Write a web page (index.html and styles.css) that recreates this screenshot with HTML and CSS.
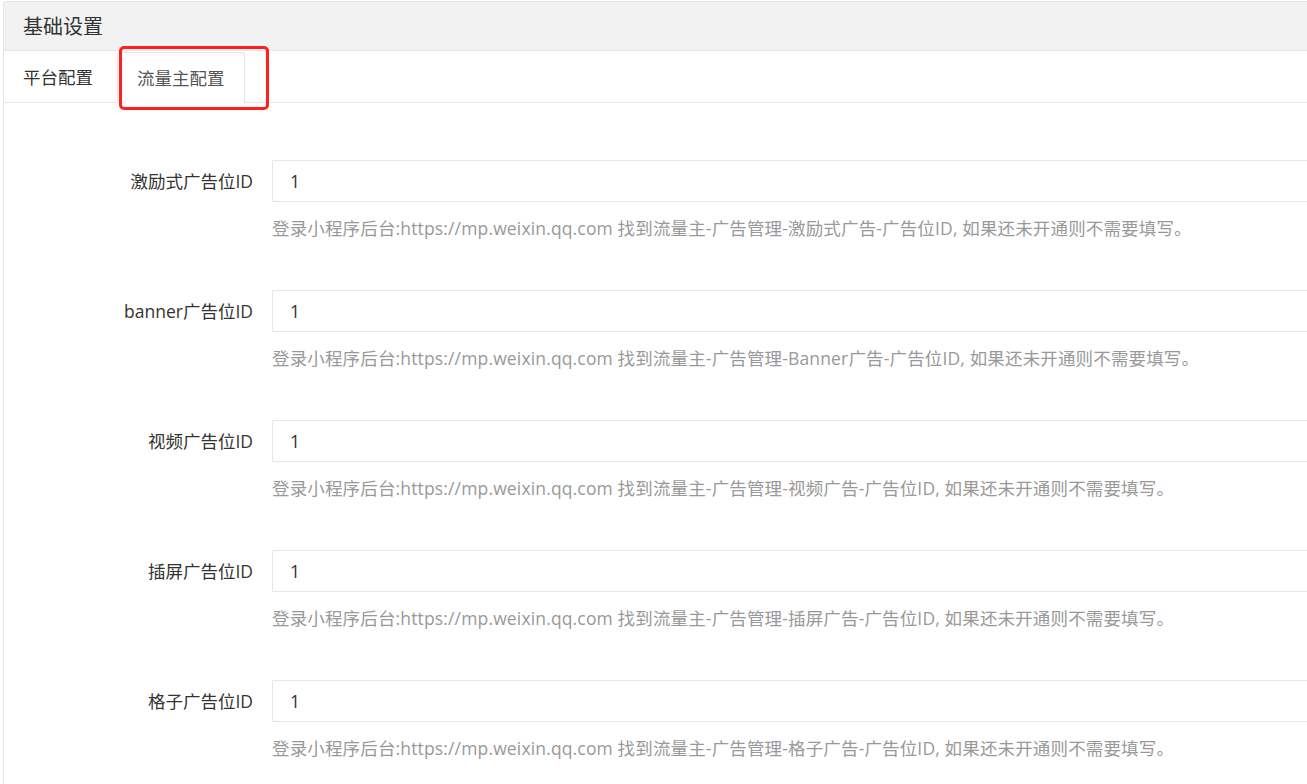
FILE: index.html
```html
<!DOCTYPE html>
<html lang="zh-CN">
<head>
<meta charset="utf-8">
<title>基础设置</title>
<link rel="stylesheet" href="styles.css">
</head>
<body>
<div class="panel">
  <div class="panel-header">基础设置</div>
  <div class="tabs">
    <div class="tab">平台配置</div>
    <div class="tab active">流量主配置</div>
  </div>
  <div class="form">
    <div class="item">
      <label class="label">激励式广告位ID</label>
      <div class="field">
        <div class="input">1</div>
        <div class="help">登录小程序后台:https://mp.weixin.qq.com 找到流量主-广告管理-激励式广告-广告位ID, 如果还未开通则不需要填写。</div>
      </div>
    </div>
    <div class="item">
      <label class="label">banner广告位ID</label>
      <div class="field">
        <div class="input">1</div>
        <div class="help">登录小程序后台:https://mp.weixin.qq.com 找到流量主-广告管理-Banner广告-广告位ID, 如果还未开通则不需要填写。</div>
      </div>
    </div>
    <div class="item">
      <label class="label">视频广告位ID</label>
      <div class="field">
        <div class="input">1</div>
        <div class="help">登录小程序后台:https://mp.weixin.qq.com 找到流量主-广告管理-视频广告-广告位ID, 如果还未开通则不需要填写。</div>
      </div>
    </div>
    <div class="item">
      <label class="label">插屏广告位ID</label>
      <div class="field">
        <div class="input">1</div>
        <div class="help">登录小程序后台:https://mp.weixin.qq.com 找到流量主-广告管理-插屏广告-广告位ID, 如果还未开通则不需要填写。</div>
      </div>
    </div>
    <div class="item">
      <label class="label">格子广告位ID</label>
      <div class="field">
        <div class="input">1</div>
        <div class="help">登录小程序后台:https://mp.weixin.qq.com 找到流量主-广告管理-格子广告-广告位ID, 如果还未开通则不需要填写。</div>
      </div>
    </div>
  </div>
</div>
<div class="highlight"></div>
</body>
</html>
```
FILE: styles.css
```css
html, body {
  margin: 0;
  padding: 0;
  background: #fff;
  overflow: hidden;
}
body {
  font-family: "Open Sans", "Noto Sans CJK SC", "Microsoft YaHei", sans-serif;
  color: #333;
  position: relative;
  height: 784px;
}
.panel {
  margin: 1px 0 0 3px;
  border: 1px solid #e6e6e6;
  border-right: none;
  border-bottom: none;
  border-radius: 3px 0 0 0;
  height: 800px;
}
.panel-header {
  height: 48px;
  line-height: 50px;
  background: #f2f2f2;
  border-bottom: 1px solid #e6e6e6;
  padding-left: 19px;
  font-size: 20px;
  color: #333;
}
.tabs {
  display: flex;
  gap: 5px;
  height: 51px;
  border-bottom: 1px solid #e6e6e6;
}
.tab {
  padding: 0 19px;
  height: 51px;
  line-height: 52px;
  font-size: 17.5px;
  color: #333;
  box-sizing: border-box;
}
.active {
  margin-top: 1px;
  height: 51px;
  line-height: 50px;
  border: 1px solid #e6e6e6;
  border-bottom: none;
  border-radius: 3px 3px 0 0;
  background: #fff;
  color: #555;
  position: relative;
  z-index: 1;
}
.form {
  padding-top: 57px;
}
.item {
  display: grid;
  grid-template-columns: 249px 1fr;
  column-gap: 19px;
  margin-bottom: 49px;
}
.label {
  text-align: right;
  font-size: 17.5px;
  line-height: 42px;
  height: 42px;
  color: #333;
  white-space: nowrap;
}
.input {
  height: 42px;
  box-sizing: border-box;
  border: 1px solid #e6e6e6;
  border-right: none;
  border-radius: 2px 0 0 2px;
  padding-left: 17px;
  font-size: 17.5px;
  line-height: 40px;
  color: #333;
}
.help {
  margin-top: 13px;
  font-size: 17.5px;
  letter-spacing: 0.15px;
  line-height: 26px;
  color: #999;
  white-space: nowrap;
}
.highlight {
  position: absolute;
  left: 119px;
  top: 46px;
  width: 150px;
  height: 64px;
  box-sizing: border-box;
  border: 3px solid #ff1f1f;
  border-radius: 5px;
  z-index: 5;
}
```
